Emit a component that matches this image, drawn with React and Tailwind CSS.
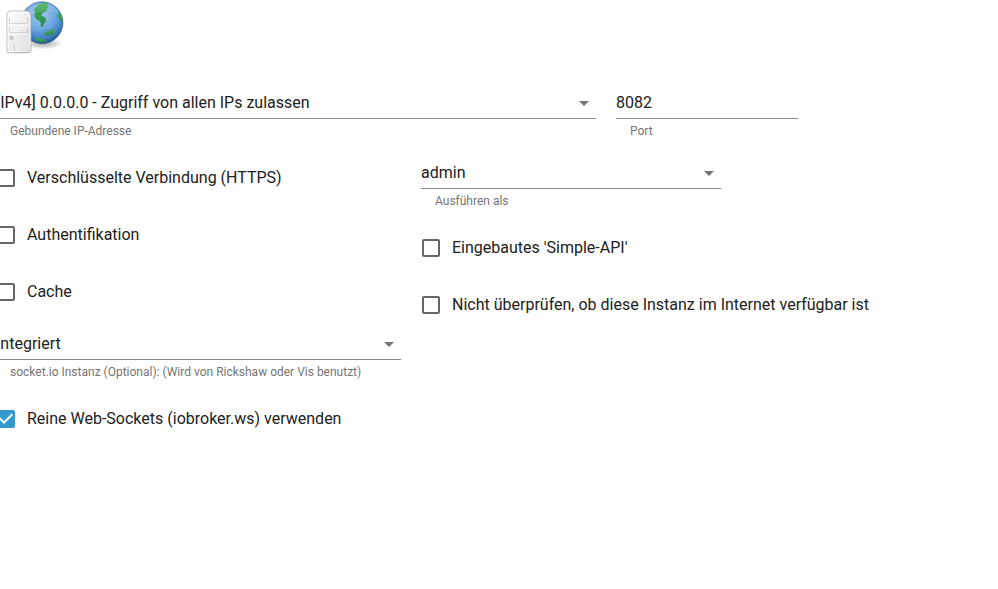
import { useId, useState } from "react";

function ServerGlobe() {
  return (
    <svg width="64" height="55" viewBox="0 0 64 55" role="img" aria-label="Web" className="ml-2">
      <defs>
        <radialGradient id="ocean" cx="0.45" cy="0.3" r="0.75">
          <stop offset="0" stopColor="#a3cbef" />
          <stop offset="0.5" stopColor="#6aa6e0" />
          <stop offset="0.8" stopColor="#3a78bf" />
          <stop offset="1" stopColor="#1d4685" />
        </radialGradient>
        <linearGradient id="land" x1="0" y1="0" x2="0" y2="1">
          <stop offset="0" stopColor="#48ad58" />
          <stop offset="1" stopColor="#2b8a50" />
        </linearGradient>
        <linearGradient id="tower" x1="0" y1="0" x2="1" y2="1">
          <stop offset="0" stopColor="#ffffff" />
          <stop offset="0.55" stopColor="#ececec" />
          <stop offset="1" stopColor="#cccccc" />
        </linearGradient>
        <radialGradient id="shade">
          <stop offset="0" stopColor="#000" stopOpacity="0.35" />
          <stop offset="1" stopColor="#000" stopOpacity="0" />
        </radialGradient>
        <clipPath id="globe">
          <circle cx="38" cy="22.7" r="20.8" />
        </clipPath>
      </defs>
      <ellipse cx="39" cy="43.5" rx="20" ry="6" fill="url(#shade)" />
      <ellipse cx="15" cy="51.5" rx="14" ry="2.5" fill="url(#shade)" />
      <circle cx="38" cy="22.7" r="20.9" fill="url(#ocean)" stroke="#34598a" strokeWidth="0.7" />
      <g clipPath="url(#globe)" fill="url(#land)">
        <path d="M29.5 10L32 7L35.5 4L40 2.5L44 3L43 5.5L44.5 7.5L42.5 8.5L43.5 10.5L41 12L38.5 13L37.5 15.5L40.5 17L42 19L41.5 22L39.5 24.5L38.5 27L36.5 26.5L37 23.5L35.5 21L32.5 19.5L30.5 16.5L30.5 13.5L32 11.5L30 11.8Z" />
        <path d="M53.5 11.5L56 13L58.8 18.5L58.8 23L56.5 21.5L55.5 18.5L53.5 17L54.5 14Z" />
        <path d="M40 33L42 31.5L44.5 31.5L46.5 29.5L50.5 29.5L51 32.5L49 35.5L46.5 34.5L44 35.8L41 35.2Z" />
        <path d="M31 38.5L33.5 37L36 38.5L40.5 39.5L42 41.5L38 42.5L32.5 41Z" />
      </g>
      <path d="M20 17C24 6 35 1 46 4.5C51 6.5 54 10 55.5 14C45 10 31 11 20 17Z" fill="#fff" opacity="0.13" />
      <path d="M7 11H22.5Q26.7 11.2 26.8 15L27 50Q27 52.3 24.8 52.4L5.3 52.8Q3 52.8 3 50.5V15.5Q3 11.2 7 11Z" fill="url(#tower)" stroke="#9c9c9c" strokeWidth="0.7" />
      <path d="M7.2 12H22.3Q25.8 12 25.9 15.5L26 49.8Q26 51.3 24.5 51.4L5.6 51.8Q4 51.8 4 50V16Q4 12.1 7.2 12Z" fill="none" stroke="#fff" strokeWidth="0.9" opacity="0.85" />
      <path d="M5.5 17.5V22.5Q5.5 23.7 6.7 23.7H22.5Q23.7 23.7 23.7 22.5V17.5M5.5 27V31.5Q5.5 32.7 6.7 32.7H22.5Q23.7 32.7 23.7 31.5V27" fill="none" stroke="#c2c2c2" strokeWidth="0.8" />
      <path d="M5.8 25H23.5M5.8 34H23.5" stroke="#fff" strokeWidth="1" />
      <circle cx="7.4" cy="38" r="1.9" fill="#d2d2d2" stroke="#b4b4b4" strokeWidth="0.7" />
      <path d="M10.5 44L25.5 34V50.5L10.5 51Z" fill="#fff" opacity="0.3" />
      <path d="M10.5 44V51" stroke="#b8b8b8" strokeWidth="0.6" />
    </svg>
  );
}

const fieldClass =
  "block h-8 w-full appearance-none rounded-none border-b border-[#8c8c8c] bg-transparent p-0 text-base leading-5 text-[#212121] outline-none focus:border-[#3399cc]";

function Helper({ id, children }) {
  return (
    <label htmlFor={id} className="block pt-1 pl-3.5 text-xs leading-4 text-[#757575]">
      {children}
    </label>
  );
}

function SelectField({ label, options, className }) {
  const id = useId();
  return (
    <div className={className}>
      <div className="grid items-center">
        <select id={id} className={`${fieldClass} col-start-1 row-start-1 pr-6`}>
          {options.map((option) => (
            <option key={option}>{option}</option>
          ))}
        </select>
        <svg
          viewBox="0 0 24 24"
          className="pointer-events-none col-start-1 row-start-1 size-6 justify-self-end"
          fill="#757575"
          aria-hidden="true"
        >
          <path d="M7 10l5 5 5-5z" />
        </svg>
      </div>
      <Helper id={id}>{label}</Helper>
    </div>
  );
}

function TextField({ label, value, className }) {
  const id = useId();
  return (
    <div className={className}>
      <input id={id} type="text" inputMode="numeric" defaultValue={value} className={fieldClass} />
      <Helper id={id}>{label}</Helper>
    </div>
  );
}

function CheckField({ label, initial = false }) {
  const [checked, setChecked] = useState(initial);
  return (
    <label className="flex min-h-[38px] cursor-pointer items-center gap-3 pl-px text-base leading-5">
      <span className="grid shrink-0">
        <input
          type="checkbox"
          checked={checked}
          onChange={(event) => setChecked(event.target.checked)}
          className="col-start-1 row-start-1 size-[18px] appearance-none rounded-xs border-2 border-[#666666] checked:border-[#3399cc] checked:bg-[#3399cc]"
        />
        {checked && (
          <svg
            viewBox="3 3 18 18"
            className="pointer-events-none col-start-1 row-start-1 size-[18px]"
            fill="#fff"
            aria-hidden="true"
          >
            <path d="M10 17l-5-5 1.41-1.41L10 14.17l7.59-7.59L19 8l-9 9z" />
          </svg>
        )}
      </span>
      {label}
    </label>
  );
}

export default function App() {
  return (
    <div className="min-h-screen overflow-hidden bg-white font-[Roboto,sans-serif] text-[#212121]">
      <main className="-ml-1">
        <header>
          <ServerGlobe />
        </header>
        <form>
          <div className="flex gap-5 pt-8">
            <SelectField
              className="w-full max-w-[600px]"
              label="Gebundene IP-Adresse"
              options={["[IPv4] 0.0.0.0 - Zugriff von allen IPs zulassen", "[IPv4] 127.0.0.1"]}
            />
            <TextField className="w-full max-w-[182px]" label="Port" value="8082" />
          </div>
          <div className="flex gap-5 pt-[18px]">
            <div className="w-full max-w-[405px] pt-0.5">
              <div className="flex flex-col gap-[19px]">
                <CheckField label="Verschlüsselte Verbindung (HTTPS)" />
                <CheckField label="Authentifikation" />
                <CheckField label="Cache" />
              </div>
              <SelectField
                className="pt-[17px] pb-5"
                label="socket.io Instanz (Optional): (Wird von Rickshaw oder Vis benutzt)"
                options={["Integriert"]}
              />
              <CheckField label="Reine Web-Sockets (iobroker.ws) verwenden" initial />
            </div>
            <div className="min-w-0 flex-1">
              <SelectField className="max-w-[300px] pb-5" label="Ausführen als" options={["admin"]} />
              <div className="flex flex-col gap-[19px]">
                <CheckField label="Eingebautes 'Simple-API'" />
                <CheckField label="Nicht überprüfen, ob diese Instanz im Internet verfügbar ist" />
              </div>
            </div>
          </div>
        </form>
      </main>
    </div>
  );
}
